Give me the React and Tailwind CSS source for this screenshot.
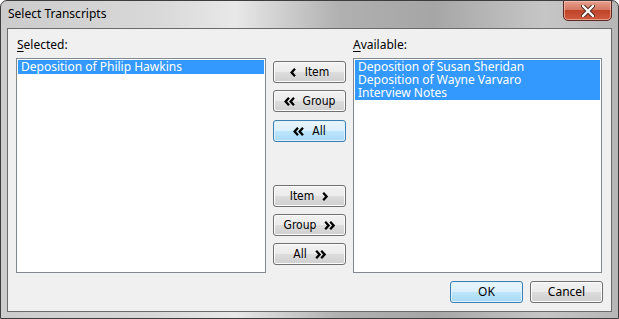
import React from "react";

const Chev = ({ dir = "left", double = false }) => {
  const one = (x) =>
    dir === "left" ? `M${x + 5} 0.8 L${x + 1.6} 4.5 L${x + 5} 8.2` : `M${x + 1.2} 0.8 L${x + 4.6} 4.5 L${x + 1.2} 8.2`;
  const w = double ? 11 : 7;
  return (
    <svg width={w} height="9" viewBox={`0 0 ${w} 9`} className="shrink-0">
      <path d={one(0)} fill="none" stroke="#000" strokeWidth="2.3" strokeLinejoin="miter" />
      {double && <path d={one(5)} fill="none" stroke="#000" strokeWidth="2.3" strokeLinejoin="miter" />}
    </svg>
  );
};

const Btn = ({ children, primary = false, className = "" }) => (
  <div
    className={
      "h-[22px] w-[73px] rounded-[3px] border flex items-center justify-center gap-[8px] text-[12px] text-black " +
      (primary
        ? "border-[#3c7fb1] bg-[linear-gradient(#eaf6fd_0%,#d9f0fc_50%,#bee6fd_50%,#a7d9f5_100%)] shadow-[inset_0_0_0_1px_#dff2fc] "
        : "border-[#707070] bg-[linear-gradient(#f2f2f2_0%,#ebebeb_50%,#dddddd_50%,#cfcfcf_100%)] shadow-[inset_0_0_0_1px_#fcfcfc] ") +
      className
    }
    style={{ fontFamily: '"DejaVu Sans Condensed","DejaVu Sans",sans-serif' }}
  >
    {children}
  </div>
);

export default function App() {
  return (
    <div
      className="w-[619px] h-[319px] relative overflow-hidden rounded-t-[7px] border border-[#3d3d3d] bg-[linear-gradient(to_right,#cccccc_0%,#d8d8d8_25%,#e8e8e8_38%,#b0b0b0_55%,#a6a6a6_70%,#c6c6c6_88%,#b6b6b6_100%)] flex flex-col"
      style={{ fontFamily: '"Noto Sans","Open Sans",sans-serif' }}
    >
      <div className="h-[27px] shrink-0 flex items-start pl-[7px] pt-[5px] text-[12px] leading-[16px] text-black">
        Select Transcripts
      </div>
      <div className="absolute top-[-1px] right-[6px] w-[49px] h-[21px] rounded-b-[5px] border border-[#5a2a22] bg-[linear-gradient(#e8a08e_0%,#d47a64_45%,#c0442a_50%,#cf5a3e_100%)] shadow-[inset_0_0_0_1px_rgba(255,200,190,0.6)] flex items-center justify-center">
        <svg width="14" height="12" viewBox="0 0 14 12">
          <path d="M2 1 L12 11 M12 1 L2 11" stroke="#4a2a20" strokeWidth="4.2" strokeLinecap="round" />
          <path d="M2 1 L12 11 M12 1 L2 11" stroke="#ffffff" strokeWidth="2.4" strokeLinecap="round" />
        </svg>
      </div>
      <div className="mx-[6px] mb-[6px] flex-1 border border-[#6b6b6b] bg-[#f0f0f0] px-[8px] text-[12px] text-black">
        <div className="flex">
          <div className="w-[250px] shrink-0 flex flex-col">
            <div className="h-[29px] pt-[8px] pl-[1px] leading-[16px]">
              <span className="underline underline-offset-2">S</span>elected:
            </div>
            <div className="h-[215px] border border-[#828790] bg-white p-[1px]">
              <div className="h-[14px] leading-[14px] bg-[#3399ff] text-white pl-[3px] whitespace-nowrap">
                Deposition of Philip Hawkins
              </div>
            </div>
          </div>
          <div className="w-[73px] shrink-0 ml-[7px] pt-[32px] flex flex-col">
            <Btn>
              <Chev dir="left" />
              <span>Item</span>
            </Btn>
            <Btn className="mt-[7px]">
              <Chev dir="left" double />
              <span>Group</span>
            </Btn>
            <Btn primary className="mt-[8px]">
              <Chev dir="left" double />
              <span>All</span>
            </Btn>
            <Btn className="mt-[43px]">
              <span>Item</span>
              <Chev dir="right" />
            </Btn>
            <Btn className="mt-[7px]">
              <span>Group</span>
              <Chev dir="right" double />
            </Btn>
            <Btn className="mt-[7px]">
              <span>All</span>
              <Chev dir="right" double />
            </Btn>
          </div>
          <div className="w-[249px] shrink-0 ml-[7px] flex flex-col">
            <div className="h-[29px] pt-[8px] leading-[16px]">
              <span className="underline underline-offset-2">A</span>vailable:
            </div>
            <div className="h-[215px] border border-[#828790] bg-white p-[1px]">
              <div className="h-[40px] bg-[#3399ff] text-white pl-[3px] leading-[13px] whitespace-nowrap">
                Deposition of Susan Sheridan
                <br />
                Deposition of Wayne Varvaro
                <br />
                Interview Notes
              </div>
            </div>
          </div>
        </div>
        <div className="flex justify-end gap-[7px] mt-[8px]">
          <Btn primary>
            <span style={{ fontFamily: '"Noto Sans",sans-serif' }}>OK</span>
          </Btn>
          <Btn>
            <span style={{ fontFamily: '"Noto Sans",sans-serif' }}>Cancel</span>
          </Btn>
        </div>
      </div>
    </div>
  );
}
